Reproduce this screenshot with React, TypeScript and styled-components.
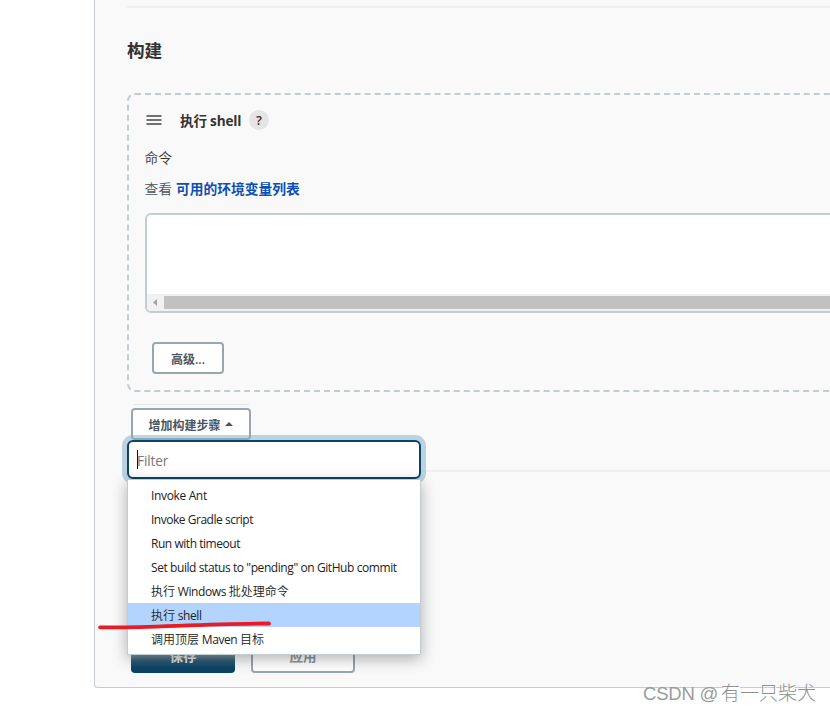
import React from "react";
import styled, { createGlobalStyle, css } from "styled-components";

const GlobalStyle = createGlobalStyle`
  * { box-sizing: border-box; }
  html, body { margin: 0; overflow: hidden; background: #fff; }
  body {
    font-family: "Open Sans", "Noto Sans CJK SC", sans-serif;
    font-size: 13.75px;
    color: #333;
  }
`;

const Page = styled.div`
  position: relative;
  width: 830px;
  height: 711px;
  padding-left: 94px;
  overflow: hidden;
`;

const Panel = styled.main`
  display: flow-root;
  width: 1200px;
  height: 688px;
  padding: 0 32px;
  background: #f9f9f9;
  border: 1px solid #c3cdd1;
  border-top: 0;
  border-radius: 0 0 4px 4px;
`;

const Divider = styled.hr<{ $top: number }>`
  height: 2px;
  margin: ${(p) => p.$top}px 0 0;
  border: 0;
  background: #f0f0f0;
`;

const Heading = styled.h2`
  height: 24px;
  margin: 30px 0 0;
  font-size: 17.6px;
  line-height: 24px;
  font-weight: 700;
`;

const StepCard = styled.section`
  height: 299px;
  margin-top: 31px;
  padding: 15px 16px 0;
  border: 2px dashed #c3cdd1;
  border-radius: 8px;
`;

const StepHeader = styled.div`
  display: flex;
  align-items: center;
  height: 20px;
  padding-left: 1px;
`;

const DragHandle = styled.svg`
  width: 16px;
  height: 10px;
  margin-right: 18px;
`;

const StepTitle = styled.span`
  width: 63px;
  padding-top: 1px;
  font-size: 13.6px;
  font-weight: 700;
  line-height: 20px;
  letter-spacing: -0.2px;
  white-space: nowrap;
`;

const HelpBadge = styled.span`
  width: 20px;
  height: 20px;
  margin-left: 6px;
  border-radius: 50%;
  background: #e5e5e5;
  font-size: 13px;
  font-weight: 600;
  line-height: 20px;
  text-align: center;
`;

const Line = styled.div<{ $top: number; $muted?: boolean }>`
  height: 20px;
  margin-top: ${(p) => p.$top}px;
  font-weight: 350;
  line-height: 20px;
  text-indent: -0.5px;
  color: ${(p) => (p.$muted ? "#4d545d" : "#333")};
`;

const Link = styled.a`
  margin-left: 4px;
  font-weight: 700;
  color: #0b50b4;
`;

const CommandArea = styled.div`
  display: flex;
  flex-direction: column;
  justify-content: flex-end;
  height: 100px;
  margin-top: 14px;
  border: 2px solid #c3cdd1;
  border-radius: 6px;
  background: #fff;
  overflow: hidden;
`;

const ScrollTrack = styled.div`
  display: flex;
  align-items: center;
  height: 17px;
  background: #f1f1f1;
`;

const ScrollArrow = styled.svg`
  width: 17px;
  height: 17px;
  flex: none;
`;

const ScrollThumb = styled.div`
  flex: 1;
  height: 13px;
  background: #c1c1c1;
`;

const Button = styled.button<{ $width: number; $shaded?: boolean; $primary?: boolean }>`
  display: flex;
  align-items: center;
  justify-content: center;
  width: ${(p) => p.$width}px;
  height: 32px;
  padding: 1px 0 0;
  border: 2px solid #98a6ae;
  border-radius: 4px;
  background: #fff;
  color: #4d545d;
  font: 600 12px "Open Sans", "Noto Sans CJK SC", sans-serif;
  white-space: nowrap;
  ${(p) =>
    p.$shaded &&
    css`
      padding: 0 0 4px;
      font-size: 13.6px;
      color: #8f959b;
    `}
  ${(p) =>
    p.$primary &&
    css`
      border: 0;
      background: linear-gradient(#8b9aa3 13px, #2f5c77 20px, #0b4464 27px);
      color: #e4e7e9;
    `}
`;

const AdvancedSlot = styled.div`
  margin: 29px 0 0 7px;
`;

const AddStep = styled.div`
  position: relative;
  width: 120px;
  margin: 12px 0 0 4px;
`;

const DropLine = styled.div`
  width: 115px;
  height: 1px;
  margin: 0 0 3px 3px;
  background: #dfe9ee;
`;

const Caret = styled.svg`
  width: 8px;
  height: 4px;
  margin: 0 1px 1px 4px;
`;

const Menu = styled.div`
  position: absolute;
  z-index: 2;
  top: 36px;
  left: -4px;
  width: 294px;
`;

const Filter = styled.div`
  display: flex;
  align-items: center;
  height: 39px;
  padding: 1px 0 0 8px;
  border: 2px solid #0b4464;
  border-radius: 6px;
  background: #fff;
  box-shadow: 0 0 0 5px rgba(128, 175, 205, 0.52);
  color: #777;
  font-size: 13.6px;
  letter-spacing: -0.1px;
`;

const TextCursor = styled.span`
  width: 1px;
  height: 19px;
  margin: -2px -1px 0 0;
  background: #111;
`;

const MenuList = styled.ul`
  position: relative;
  height: 176px;
  margin: 0;
  padding: 3px 0;
  border: 1px solid #c3cdd1;
  background: #fff;
  box-shadow: 0 4px 14px rgba(0, 0, 0, 0.3);
  list-style: none;
`;

const MenuItem = styled.li<{ $active?: boolean; $spacing: number }>`
  height: 24px;
  padding-left: 23px;
  background: ${(p) => (p.$active ? "#b3d4ff" : "transparent")};
  color: #222;
  font-size: 12px;
  line-height: 25px;
  letter-spacing: ${(p) => p.$spacing}px;
  white-space: nowrap;
`;

const Cjk = styled.span`
  font-weight: 350;
  letter-spacing: 0;
`;

const Actions = styled.div`
  display: flex;
  gap: 16px;
  margin: 169px 0 0 4px;
`;

const Marker = styled.svg`
  position: absolute;
  z-index: 3;
  left: 96px;
  top: 616px;
  width: 180px;
  height: 18px;
`;

const Watermark = styled.div`
  position: absolute;
  left: 643px;
  top: 680px;
  color: #8d9092;
  font: 300 19px/26px "Open Sans", "Noto Sans CJK SC", sans-serif;
  white-space: nowrap;
  text-shadow: 1px 1px 0 #fff;
`;

const WatermarkSite = styled.span`
  display: inline-block;
  width: 78px;
  font: 400 18.5px/26px "Liberation Sans", sans-serif;
  letter-spacing: -0.2px;
  color: #999c9e;
`;

const steps = [
  { label: "Invoke Ant", spacing: -0.35 },
  { label: "Invoke Gradle script", spacing: -0.48 },
  { label: "Run with timeout", spacing: -0.46 },
  { label: 'Set build status to "pending" on GitHub commit', spacing: -0.42 },
  { label: "执行 Windows 批处理命令", spacing: -0.4 },
  { label: "执行 shell", spacing: -0.4, active: true },
  { label: "调用顶层 Maven 目标", spacing: -0.4 },
];

// Chinese runs keep their natural spacing; Latin runs are set tighter.
function MixedLabel({ text }: { text: string }) {
  return (
    <>
      {text.split(/([\u4e00-\u9fff]+)/).map((run, i) =>
        i % 2 ? <Cjk key={i}>{run}</Cjk> : run
      )}
    </>
  );
}

export default function App() {
  return (
    <Page>
      <GlobalStyle />
      <Panel>
        <Divider $top={6} />
        <Heading>构建</Heading>
        <StepCard>
          <StepHeader>
            <DragHandle viewBox="0 0 16 10">
              <path d="M.5 1h15M.5 5h15M.5 9h15" stroke="#444" strokeWidth="1.6" />
            </DragHandle>
            <StepTitle>执行 shell</StepTitle>
            <HelpBadge>?</HelpBadge>
          </StepHeader>
          <Line $top={18}>命令</Line>
          <Line $top={11} $muted>
            查看<Link>可用的环境变量列表</Link>
          </Line>
          <CommandArea>
            <ScrollTrack>
              <ScrollArrow viewBox="0 0 17 17">
                <path d="M10 5v7L6 8.5z" fill="#a3a3a3" />
              </ScrollArrow>
              <ScrollThumb />
            </ScrollTrack>
          </CommandArea>
          <AdvancedSlot>
            <Button $width={72}>高级...</Button>
          </AdvancedSlot>
        </StepCard>
        <AddStep>
          <DropLine />
          <Button $width={120}>
            增加构建步骤
            <Caret viewBox="0 0 8 4">
              <path d="M0 4 4 0l4 4z" fill="#4d545d" />
            </Caret>
          </Button>
          <Menu>
            <Filter>
              <TextCursor />
              Filter
            </Filter>
            <MenuList>
              {steps.map((s) => (
                <MenuItem key={s.label} $active={s.active} $spacing={s.spacing}>
                  <MixedLabel text={s.label} />
                </MenuItem>
              ))}
            </MenuList>
          </Menu>
        </AddStep>
        <Divider $top={30} />
        <Actions>
          <Button $width={104} $shaded $primary>保存</Button>
          <Button $width={104} $shaded>应用</Button>
        </Actions>
      </Panel>
      <Marker viewBox="0 0 180 18">
        <path d="M4 11.3C45 12.5 100 8 173 7.5" fill="none" stroke="#e81c22" strokeWidth="3.8" strokeLinecap="round" />
      </Marker>
      <Watermark>
        <WatermarkSite>CSDN @</WatermarkSite>有一只柴犬
      </Watermark>
    </Page>
  );
}
